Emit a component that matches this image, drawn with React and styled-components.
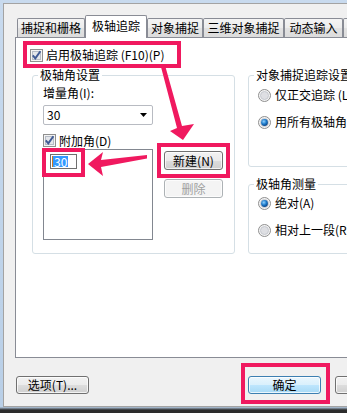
import React from 'react';
import styled, { createGlobalStyle, css } from 'styled-components';

const PINK = '#f0195f';

const GlobalStyle = createGlobalStyle`
  html, body {
    margin: 0;
    padding: 0;
  }
  body {
    background: #2c2c2c;
  }
`;

const Screen = styled.div`
  position: relative;
  box-sizing: border-box;
  width: 347px;
  height: 413px;
  overflow: hidden;
  padding: 3px 0 0 3px;
  background: linear-gradient(to bottom, #c8daee 0, #b9cfe7 407px, #2c2c2c 410px);
  font-family: "Noto Sans CJK SC", "Noto Sans", sans-serif;
  font-size: 12px;
  line-height: 14px;
  color: #000;
`;

const Client = styled.div`
  box-sizing: border-box;
  width: 420px;
  height: 404px;
  border: 1px solid #a3a3a3;
  border-right: none;
  background: #f0f0f0;
  padding: 11px 0 0 11px;
`;

const TabRow = styled.div`
  position: relative;
  z-index: 1;
  display: flex;
  align-items: flex-end;
  height: 22px;
  margin-left: 2px;
`;

const Tab = styled.div`
  box-sizing: border-box;
  flex: none;
  width: ${p => p.$w}px;
  height: 19px;
  border: 1px solid #898c95;
  border-bottom: none;
  border-radius: 2px 2px 0 0;
  background: linear-gradient(to bottom, #f4f4f4 0%, #ececec 50%, #e2e2e2 51%, #dcdcdc 100%);
  display: flex;
  align-items: center;
  justify-content: center;
  white-space: nowrap;
  ${p => p.$active && css`
    height: 23px;
    margin-bottom: -1px;
    background: #fff;
    padding-bottom: 2px;
  `}
`;

const Panel = styled.div`
  box-sizing: border-box;
  width: 400px;
  height: 321px;
  border: 1px solid #898c95;
  background: #fff;
`;

const Annot = styled.div`
  position: ${p => (p.$over ? 'absolute' : 'relative')};
  box-sizing: border-box;
  flex: none;
  border: 4px solid ${PINK};
`;

const MainCheck = styled(Annot)`
  display: flex;
  align-items: center;
  gap: 3px;
  width: 158px;
  height: 27px;
  margin: 3px 0 0 7px;
  padding: 1px 0 0 3px;
`;

const GroupsRow = styled.div`
  display: flex;
  gap: 13px;
  margin-left: 16px;
`;

const Group = styled.fieldset`
  box-sizing: border-box;
  flex: none;
  margin: 0;
  padding: 0;
  min-width: 0;
  width: ${p => p.$w}px;
  height: ${p => p.$h}px;
  border: 1px solid #d5dfe5;
  border-radius: 3px;
`;

const Legend = styled.legend`
  height: 14px;
  margin-left: 5px;
  padding: 0 2px;
  line-height: 14px;
  white-space: nowrap;
`;

const GroupBody = styled.div`
  display: flex;
  flex-direction: ${p => (p.$column ? 'column' : 'row')};
  gap: ${p => p.$gap || 0}px;
  padding: ${p => p.$pt}px 0 0 ${p => p.$pl}px;
  white-space: nowrap;
`;

const RightGroups = styled.div`
  display: flex;
  flex-direction: column;
  gap: 10px;
`;

const LeftCol = styled.div`
  display: flex;
  flex-direction: column;
  width: 110px;
`;

const RightCol = styled.div`
  display: flex;
  flex-direction: column;
  align-items: flex-start;
  margin: 57px 0 0 4px;
`;

const Combo = styled.div`
  box-sizing: border-box;
  display: flex;
  align-items: center;
  justify-content: space-between;
  height: 20px;
  margin-top: 5px;
  padding: 0 5px 0 3px;
  border: 1px solid #b8bbc2;
  border-radius: 2px;
  background: #fff;
`;

const CheckRow = styled.label`
  display: flex;
  align-items: center;
  gap: 3px;
  height: 13px;
  margin-top: 9px;
  white-space: nowrap;
`;

const ListBox = styled.div`
  position: relative;
  box-sizing: border-box;
  height: 91px;
  margin-top: 2px;
  padding: 4px 0 0 6px;
  border: 1px solid #828790;
  background: #fff;
`;

const EditBox = styled.div`
  box-sizing: border-box;
  display: flex;
  align-items: center;
  width: 27px;
  height: 15px;
  padding-left: 1px;
  border: 1px solid #6f6f6f;
`;

const Selected = styled.span`
  padding: 0 1px;
  line-height: 11px;
  background: #3399ff;
  color: #fff;
  border-left: 1px solid #d07a20;
`;

const EditMark = styled(Annot)`
  left: -2px;
  top: -2px;
  width: 43px;
  height: 29px;
`;

const NewMark = styled(Annot)`
  padding: 4px 3px;
`;

const buttonLook = {
  normal: css`
    border: 1px solid #707070;
    background: linear-gradient(to bottom, #f2f2f2 0%, #ebebeb 50%, #dddddd 51%, #cfcfcf 100%);
  `,
  disabled: css`
    border: 1px solid #adb2b5;
    background: #f4f4f4;
    color: #a0a0a0;
  `,
  primary: css`
    border: 1px solid #3c7fb1;
    background: linear-gradient(to bottom, #eaf6fd 0%, #d9f0fc 50%, #bee6fd 51%, #a7d9f5 100%);
  `,
};

const Button = styled.div`
  box-sizing: border-box;
  flex: none;
  display: flex;
  align-items: center;
  justify-content: center;
  width: ${p => p.$w || 59}px;
  height: ${p => p.$h || 19}px;
  margin: ${p => p.$m || 0};
  border-radius: 3px;
  box-shadow: inset 0 0 0 1px rgba(255, 255, 255, 0.75);
  white-space: nowrap;
  ${p => buttonLook[p.$look || 'normal']}
`;

const Footer = styled.div`
  display: flex;
  align-items: flex-start;
  margin-left: 1px;
`;

const OkMark = styled(Annot)`
  margin: 5px 0 0 152px;
  padding: 9px 5px 6px 3px;
`;

const RadioRow = styled.div`
  display: flex;
  align-items: center;
  gap: 4px;
  height: 14px;
`;

const Overlay = styled.svg`
  position: absolute;
  left: 0;
  top: 0;
  pointer-events: none;
`;

const Glyph = styled.svg`
  flex: none;
  display: block;
`;

function CheckBox() {
  return (
    <Glyph width="13" height="13" viewBox="0 0 13 13">
      <rect x="0.5" y="0.5" width="12" height="12" fill="#f4f4f4" stroke="#8f8f8f" />
      <rect x="2.5" y="2.5" width="8" height="8" fill="#e4e6ea" stroke="#b6bcc6" />
      <path d="M2.8 6.4 L5.3 9.4 L10.4 2.2" stroke="#3f5a95" strokeWidth="1.9" fill="none" />
    </Glyph>
  );
}

function Radio({ on }) {
  return (
    <Glyph width="13" height="13" viewBox="0 0 13 13">
      <defs>
        <radialGradient id="radioOn" cx="40%" cy="35%" r="70%">
          <stop offset="0%" stopColor="#8fd1ff" />
          <stop offset="55%" stopColor="#1b78c8" />
          <stop offset="100%" stopColor="#0b3f80" />
        </radialGradient>
      </defs>
      <circle cx="6.5" cy="6.5" r="6" fill="#f4f4f4" stroke="#8f8f8f" />
      <circle cx="6.5" cy="6.5" r="4" fill="#dedfe3" stroke="#c6c9cf" />
      {on && <circle cx="6.5" cy="6.5" r="3.4" fill="url(#radioOn)" />}
    </Glyph>
  );
}

const tabs = [
  { label: '捕捉和栅格', w: 68 },
  { label: '极轴追踪', w: 62, active: true },
  { label: '对象捕捉', w: 56 },
  { label: '三维对象捕捉', w: 81 },
  { label: '动态输入', w: 59 },
  { label: '快捷特性', w: 60 },
];

export default function App() {
  return (
    <Screen>
      <GlobalStyle />
      <Client>
        <TabRow>
          {tabs.map(t => (
            <Tab key={t.label} $w={t.w} $active={t.active}>
              {t.label}
            </Tab>
          ))}
        </TabRow>
        <Panel>
          <MainCheck>
            <CheckBox />
            <span>启用极轴追踪 (F10)(P)</span>
          </MainCheck>
          <GroupsRow>
            <Group $w={203} $h={186}>
              <Legend>极轴角设置</Legend>
              <GroupBody $pt={4} $pl={10}>
                <LeftCol>
                  <span>增量角(I):</span>
                  <Combo>
                    <span>30</span>
                    <svg width="7" height="4" viewBox="0 0 7 4">
                      <polygon points="0,0 7,0 3.5,4" fill="#000" />
                    </svg>
                  </Combo>
                  <CheckRow>
                    <CheckBox />
                    <span>附加角(D)</span>
                  </CheckRow>
                  <ListBox>
                    <EditBox>
                      <Selected>30</Selected>
                    </EditBox>
                    <EditMark $over />
                  </ListBox>
                </LeftCol>
                <RightCol>
                  <NewMark>
                    <Button>新建(N)</Button>
                  </NewMark>
                  <Button $look="disabled" $m="1px 0 0 7px">删除</Button>
                </RightCol>
              </GroupBody>
            </Group>
            <RightGroups>
              <Group $w={150} $h={99}>
                <Legend>对象捕捉追踪设置</Legend>
                <GroupBody $column $gap={13} $pt={6} $pl={9}>
                  <RadioRow>
                    <Radio />
                    <span>仅正交追踪 (L)</span>
                  </RadioRow>
                  <RadioRow>
                    <Radio on />
                    <span>用所有极轴角设置追踪(S)</span>
                  </RadioRow>
                </GroupBody>
              </Group>
              <Group $w={150} $h={77}>
                <Legend>极轴角测量</Legend>
                <GroupBody $column $gap={13} $pt={5} $pl={9}>
                  <RadioRow>
                    <Radio on />
                    <span>绝对(A)</span>
                  </RadioRow>
                  <RadioRow>
                    <Radio />
                    <span>相对上一段(R)</span>
                  </RadioRow>
                </GroupBody>
              </Group>
            </RightGroups>
          </GroupsRow>
        </Panel>
        <Footer>
          <Button $w={73} $h={18} $m="18px 0 0 0">选项(T)...</Button>
          <OkMark>
            <Button $look="primary" $w={73} $h={18}>确定</Button>
          </OkMark>
          <Button $w={73} $h={18} $m="18px 0 0 5px">取消</Button>
        </Footer>
      </Client>
      <Overlay width="347" height="413" viewBox="0 0 347 413">
        <polygon points="183,140 170,131 177,128 161,67 165.5,67 182,126 194,124" fill={PINK} />
        <polygon points="88,164 103,152 101,160 147,155 147,158.5 101,167 103,176" fill={PINK} />
      </Overlay>
    </Screen>
  );
}
